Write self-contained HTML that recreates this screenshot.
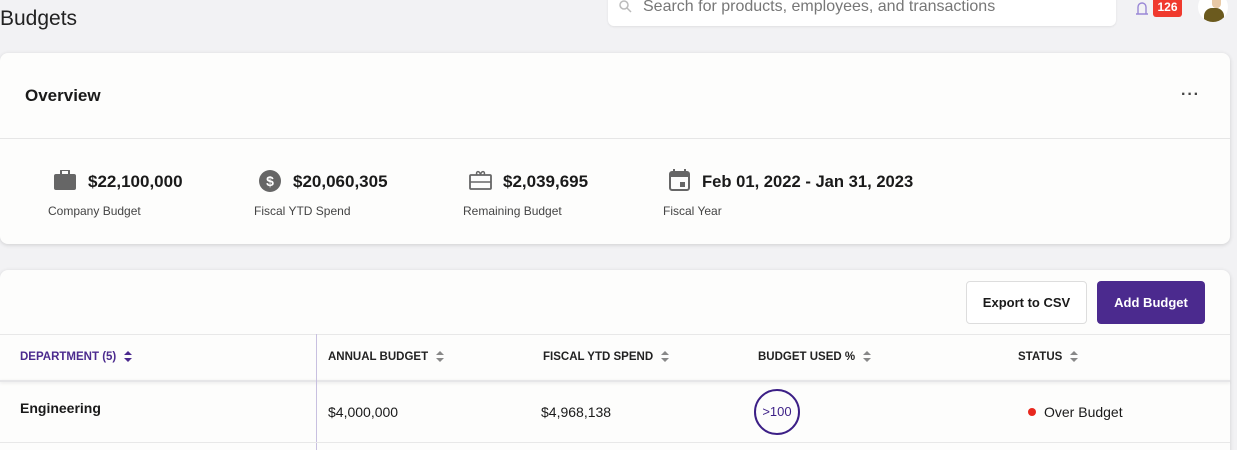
<!DOCTYPE html><html><head><style>
html,body{margin:0;width:1237px;height:450px;overflow:hidden}
body{background:#f2f2f4;font-family:"Liberation Sans",sans-serif;position:relative;color:#1a1a1a}
.a{position:absolute}
.card{position:absolute;background:#fdfdfc;border-radius:8px;box-shadow:0 1px 4px rgba(0,0,0,.15)}
.val{font-size:17px;font-weight:bold}
.lbl{font-size:12px;color:#444}
.th{font-size:11.5px;font-weight:bold;color:#222}
.sort{display:inline-block;margin-left:8px;vertical-align:middle}
</style></head><body>
<div class="a" style="left:0;top:7px;font-size:21px;color:#222">Budgets</div>
<div class="a" style="left:608px;top:-10px;width:508px;height:36px;background:#fff;border-radius:6px;box-shadow:0 1px 2px rgba(0,0,0,.08)"></div>
<svg class="a" style="left:618px;top:0" width="14" height="14"><circle cx="6" cy="5" r="4" fill="none" stroke="#bbb" stroke-width="1.5"/><path d="M9 8l4 4" stroke="#bbb" stroke-width="1.5"/></svg>
<div class="a" style="left:643px;top:-2px;font-size:16px;color:#777">Search for products, employees, and transactions</div>
<svg class="a" style="left:1133px;top:0" width="18" height="18"><path d="M3 14h12M5 14V7a4 4 0 0 1 8 0v7" fill="none" stroke="#9a88d6" stroke-width="1.4"/></svg>
<div class="a" style="left:1153px;top:-4px;width:29px;height:21px;background:#f03a2e;border-radius:3px;color:#fff;font-size:12px;font-weight:bold;text-align:center;line-height:22px">126</div>
<div class="a" style="left:1198px;top:-8px;width:30px;height:30px;border-radius:50%;background:#fff;overflow:hidden"><div class="a" style="left:6px;top:16px;width:20px;height:16px;background:#6b5a1e;border-radius:8px 8px 0 0"></div><div class="a" style="left:14px;top:2px;width:9px;height:14px;background:#e8c9a6;border-radius:4px"></div></div>

<div class="card" style="left:0;top:53px;width:1230px;height:191px"></div>
<div class="a" style="left:25px;top:86px;font-size:17px;font-weight:bold">Overview</div>
<div class="a" style="left:1181px;top:86px;font-size:16px;font-weight:bold;color:#444;letter-spacing:1px">···</div>
<div class="a" style="left:0;top:138px;width:1230px;height:1px;background:#e6e6e6"></div>

<svg class="a" style="left:54px;top:170px" width="22" height="20"><rect x="0" y="4" width="22" height="16" rx="2" fill="#666"/><rect x="7" y="0" width="8" height="6" rx="1" fill="none" stroke="#666" stroke-width="2"/></svg>
<div class="a val" style="left:88px;top:172px">$22,100,000</div>
<div class="a lbl" style="left:48px;top:204px">Company Budget</div>
<svg class="a" style="left:259px;top:170px" width="22" height="22"><circle cx="11" cy="11" r="11" fill="#666"/><text x="11" y="16" font-size="14" font-weight="bold" fill="#fff" text-anchor="middle" font-family="Liberation Sans">$</text></svg>
<div class="a val" style="left:293px;top:172px">$20,060,305</div>
<div class="a lbl" style="left:254px;top:204px">Fiscal YTD Spend</div>
<svg class="a" style="left:469px;top:170px" width="23" height="20"><rect x="1" y="5" width="21" height="14" rx="1" fill="none" stroke="#666" stroke-width="1.8"/><path d="M1 12h21M8 5c-2-4 3-5 3.5 0c.5-5 5.5-4 3.5 0" fill="none" stroke="#666" stroke-width="1.5"/></svg>
<div class="a val" style="left:503px;top:172px">$2,039,695</div>
<div class="a lbl" style="left:463px;top:204px">Remaining Budget</div>
<svg class="a" style="left:669px;top:169px" width="21" height="22"><rect x="1" y="3" width="19" height="18" rx="2" fill="none" stroke="#666" stroke-width="2"/><rect x="1" y="3" width="19" height="5" fill="#666"/><path d="M5 0v4M16 0v4" stroke="#666" stroke-width="2"/><rect x="11" y="13" width="5" height="5" fill="#666"/></svg>
<div class="a val" style="left:702px;top:172px;font-size:16.6px">Feb 01, 2022 - Jan 31, 2023</div>
<div class="a lbl" style="left:663px;top:204px">Fiscal Year</div>

<div class="card" style="left:0;top:270px;width:1230px;height:200px"></div>
<div class="a" style="left:966px;top:281px;width:119px;height:41px;border:1px solid #ddd;border-radius:4px;background:#fff;font-size:13px;font-weight:bold;text-align:center;line-height:41px">Export to CSV</div>
<div class="a" style="left:1097px;top:281px;width:108px;height:43px;background:#4b2a8e;border-radius:4px;color:#fff;font-size:13px;font-weight:bold;text-align:center;line-height:43px">Add Budget</div>
<div class="a" style="left:0;top:334px;width:1230px;height:1px;background:#e8e8e8"></div>
<div class="a" style="left:0;top:380px;width:1230px;height:2px;background:#e6e6e8;box-shadow:0 1px 3px rgba(0,0,0,.1)"></div>
<div class="a" style="left:316px;top:334px;width:1px;height:116px;background:#c8c0e0"></div>
<div class="a" style="left:0;top:442px;width:1230px;height:1px;background:#e8e8e8"></div>

<div class="a th" style="left:20px;top:351px;color:#4b2a8e">DEPARTMENT (5)<svg class="sort" width="8" height="11"><path d="M4 0l4 4H0zM4 11l4-4H0z" fill="#4b2a8e"/></svg></div>
<div class="a th" style="left:328px;top:351px">ANNUAL BUDGET<svg class="sort" width="8" height="11"><path d="M4 0l4 4H0zM4 11l4-4H0z" fill="#888"/></svg></div>
<div class="a th" style="left:543px;top:351px">FISCAL YTD SPEND<svg class="sort" width="8" height="11"><path d="M4 0l4 4H0zM4 11l4-4H0z" fill="#888"/></svg></div>
<div class="a th" style="left:758px;top:351px">BUDGET USED %<svg class="sort" width="8" height="11"><path d="M4 0l4 4H0zM4 11l4-4H0z" fill="#888"/></svg></div>
<div class="a th" style="left:1018px;top:351px">STATUS<svg class="sort" width="8" height="11"><path d="M4 0l4 4H0zM4 11l4-4H0z" fill="#888"/></svg></div>

<div class="a" style="left:20px;top:400px;font-size:14px;font-weight:bold">Engineering</div>
<div class="a" style="left:328px;top:404px;font-size:14px">$4,000,000</div>
<div class="a" style="left:541px;top:404px;font-size:14px">$4,968,138</div>
<div class="a" style="left:754px;top:389px;width:42px;height:42px;border:2.5px solid #3c1f86;border-radius:50%;font-size:13px;text-align:center;line-height:42px;color:#3c1f86">&gt;100</div>
<div class="a" style="left:1028px;top:408px;width:8px;height:8px;border-radius:50%;background:#e8281e"></div>
<div class="a" style="left:1044px;top:404px;font-size:14px">Over Budget</div>
</body></html>
